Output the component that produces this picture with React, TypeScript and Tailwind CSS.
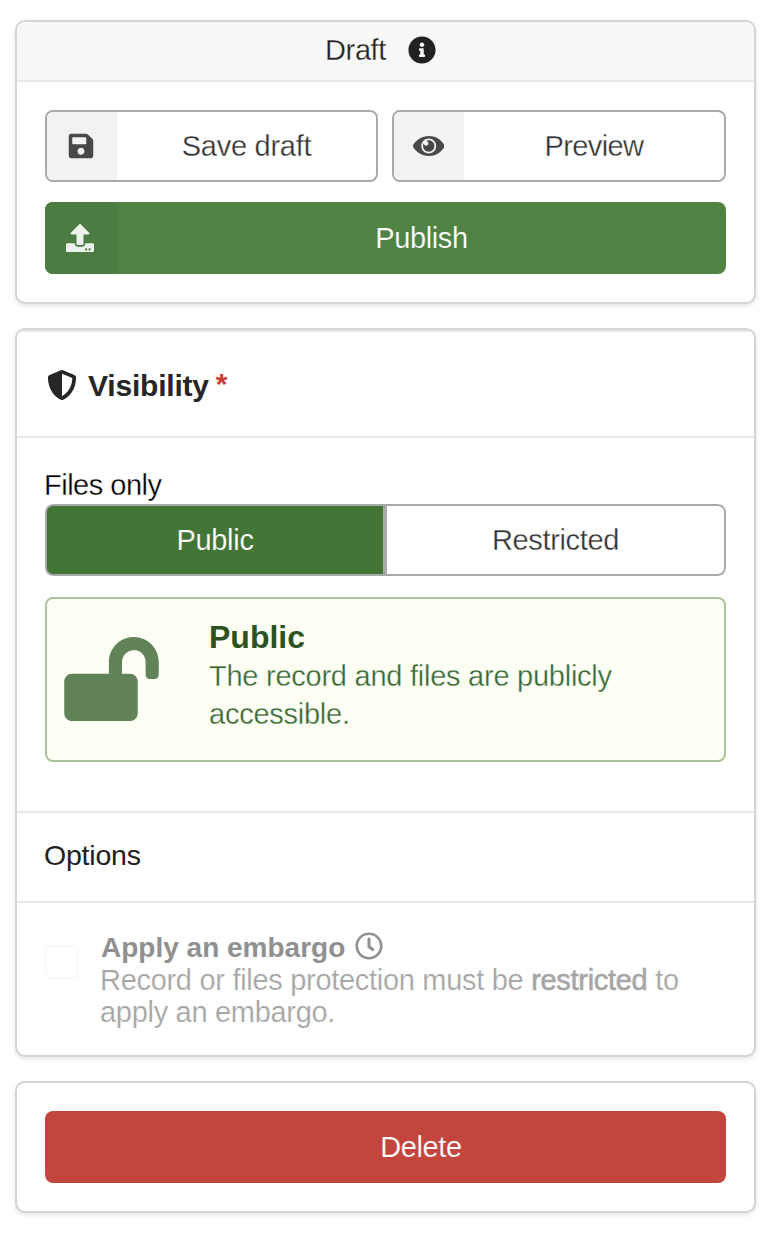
import type { ReactNode } from "react";
import { FaInfoCircle, FaSave, FaUpload, FaShieldAlt, FaLockOpen, FaRegClock } from "react-icons/fa";

const card =
  "rounded-[10px] border-2 border-[#d4d4d5] bg-white shadow-[0_2px_4px_rgba(34,36,38,0.12)]";

function EyeIcon() {
  return (
    <svg viewBox="0 0 576 512" className="mr-px h-7 w-[31.5px]" fill="currentColor" aria-hidden="true">
      <path d="M569.354 231.631C512.969 135.949 407.81 72 288 72 168.14 72 63.004 135.994 6.646 231.631a47.999 47.999 0 0 0 0 48.739C63.031 376.051 168.19 440 288 440c119.86 0 224.996-63.994 281.354-159.631a47.997 47.997 0 0 0 0-48.738zM288 392c-75.162 0-136-60.827-136-136 0-75.162 60.826-136 136-136 75.162 0 136 60.826 136 136 0 75.162-60.826 136-136 136zm104-136c0 57.438-46.562 104-104 104s-104-46.562-104-104c0-17.708 4.431-34.379 12.236-48.973l-.001.032c0 23.651 19.173 42.823 42.824 42.823s42.824-19.173 42.824-42.823c0-23.651-19.173-42.824-42.824-42.824l-.032.001C253.621 156.431 270.292 152 288 152c57.438 0 104 46.562 104 104z" />
    </svg>
  );
}

function OutlineButton({ icon, label }: { icon: ReactNode; label: ReactNode }) {
  return (
    <button className="flex h-[72px] overflow-hidden rounded-lg border-2 border-[#a9a9a9] bg-white text-[#333]">
      <span className="flex h-full w-[70px] items-center justify-center bg-[#f2f2f2] text-[#484848]">{icon}</span>
      <span className="flex h-full flex-1 items-center justify-center pt-0.5 [-webkit-text-stroke:0.3px_white]">
        {label}
      </span>
    </button>
  );
}

function ActionsCard() {
  return (
    <section className={`${card} h-[284px] overflow-hidden`}>
      <header className="flex h-[60px] items-center justify-center border-b-2 border-[#e8e8e8] bg-[#f7f7f7] pr-[10px] text-[#212121]">
        <span className="tracking-[-0.4px] [-webkit-text-stroke:0.3px_#f7f7f7]">Draft</span>
        <FaInfoCircle className="mt-[-3px] ml-[22px] size-7" />
      </header>
      <div className="flex flex-col gap-5 px-7 pt-7">
        <div className="grid grid-cols-[333px_334px] gap-[14px]">
          <OutlineButton
            icon={<FaSave className="mr-[3px] size-7" />}
            label={<span className="tracking-[-0.25px]">Save draft</span>}
          />
          <OutlineButton icon={<EyeIcon />} label={<span className="tracking-[-0.6px]">Preview</span>} />
        </div>
        <button className="flex h-[72px] overflow-hidden rounded-lg bg-[#4f8344] text-white">
          <span className="flex h-full w-[72px] items-center justify-center bg-[#4b7c41] text-[#edf2ec]">
            <FaUpload className="mr-[2px] size-7" />
          </span>
          <span className="flex h-full flex-1 items-center justify-center pt-0.5 tracking-[-0.4px] [-webkit-text-stroke:0.2px_#4f8344]">
            Publish
          </span>
        </button>
      </div>
    </section>
  );
}

function VisibilityCard() {
  return (
    <section className={`${card} h-[729px] overflow-hidden`}>
      <header className="flex h-[108px] items-center border-y-2 border-[#e8e8e8] pl-[30px] text-[30px] font-bold text-[#262626]">
        <FaShieldAlt className="mt-px mr-[11px] size-[30px]" />
        <h2 className="pt-0.5 tracking-[-0.2px]">Visibility</h2>
        <span className="-mt-0.5 ml-[7px] text-[30px] text-[#cb3d32]">*</span>
      </header>
      <div className="h-[373px] px-7 pt-[28px]">
        <p className="-ml-px h-[38px] leading-[38px] tracking-[-0.5px] text-black [-webkit-text-stroke:0.3px_white]">
          Files only
        </p>
        <div className="flex h-[72px] overflow-hidden rounded-lg">
          <button className="w-[340px] rounded-l-lg border-2 border-[#a9a9a9] bg-[#437536] pt-0.5 tracking-[-0.3px] text-white [-webkit-text-stroke:0.2px_#437536]">
            Public
          </button>
          <button className="flex-1 rounded-r-lg border-2 border-[#a9a9a9] bg-white pt-0.5 tracking-[-0.35px] text-[#333] [-webkit-text-stroke:0.3px_white]">
            Restricted
          </button>
        </div>
        <div className="mt-[21px] flex h-[165px] rounded-lg border-2 border-[#a9c598] bg-[#fdfff5]">
          <FaLockOpen className="mt-[38px] ml-[17px] h-[84px] w-[95px] text-[#61835a]" />
          <div className="ml-[50px] pt-[19px]">
            <h3 className="text-[32px] leading-[38px] font-bold text-[#2c5222]">Public</h3>
            <p className="pt-px leading-[38px] tracking-[-0.25px] text-[#3a6935] [-webkit-text-stroke:0.3px_#fdfff5]">
              The record and files are publicly
              <br />
              accessible.
            </p>
          </div>
        </div>
      </div>
      <h3 className="h-[92px] border-y-2 border-[#e8e8e8] px-[27px] text-[28.5px] leading-[84px] tracking-[-0.2px] text-[#212121]">
        Options
      </h3>
      <div className="flex px-7 pt-[28px]">
        <span className="mt-[14px] size-[34px] rounded-md border-2 border-[#f9f9f9]" />
        <div className="ml-[21px] leading-8">
          <div className="flex items-start pl-px text-[28px] text-[#909090]">
            <h4 className="pt-px font-bold">Apply an embargo</h4>
            <FaRegClock className="mt-[1px] ml-[10px] size-7" />
          </div>
          <p className="tracking-[-0.3px] text-[#a6a6a6] [-webkit-text-stroke:0.2px_white]">
            Record or files protection must be{" "}
            <b className="font-normal [-webkit-text-stroke:0.6px_#a6a6a6]">restricted</b> to
            <br />
            apply an embargo.
          </p>
        </div>
      </div>
    </section>
  );
}

export default function App() {
  return (
    <main className="flex h-[1236px] w-[772px] flex-col bg-white pt-5 pr-4 pl-[15px] font-['Liberation_Sans',Arial,sans-serif] text-[29px]">
      <ActionsCard />
      <div className="h-6" />
      <VisibilityCard />
      <div className="h-6" />
      <section className={`${card} h-[132px] p-7`}>
        <button className="h-[72px] w-full rounded-lg bg-[#c3463e] pt-0.5 pl-[71px] tracking-[-0.4px] text-white [-webkit-text-stroke:0.2px_#c3463e]">
          Delete
        </button>
      </section>
    </main>
  );
}
